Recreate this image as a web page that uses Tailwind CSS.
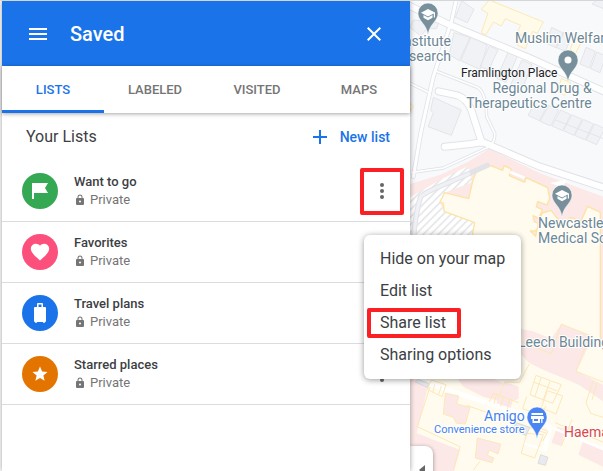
<!DOCTYPE html>
<html lang="en">
<head>
<meta charset="utf-8">
<meta name="viewport" content="width=device-width, initial-scale=1">
<title>Saved lists</title>
<script src="https://cdn.jsdelivr.net/npm/@tailwindcss/browser@4"></script>
</head>
<body class="bg-white font-[Roboto,sans-serif] text-[#3c4043]">
<div class="relative flex min-h-screen overflow-hidden border-t border-[#d5d7da] pl-0.5">

  <main class="relative z-10 w-[408px] shrink-0 bg-white shadow-[0_0_5px_rgba(0,0,0,0.4)]">
    <header class="flex h-[65px] items-center bg-[#1a73e8] px-6 text-white">
      <button type="button" aria-label="Menu" class="flex size-6 items-center justify-center">
        <svg class="size-6" viewBox="0 0 24 24" fill="currentColor" aria-hidden="true"><path d="M3 6h18v2H3zM3 11h18v2H3zM3 16h18v2H3z"/></svg>
      </button>
      <h1 class="ml-5 text-xl font-medium">Saved</h1>
      <button type="button" aria-label="Close" class="ml-auto flex size-6 items-center justify-center">
        <svg class="size-6" viewBox="0 0 24 24" fill="currentColor" aria-hidden="true"><path d="M19 6.4 17.600 5 12 10.600 6.400 5 5 6.400 10.600 12 5 17.600 6.400 19 12 13.400 17.600 19 19 17.600 13.400 12z"/></svg>
      </button>
    </header>

    <nav class="relative grid h-[47px] grid-cols-4 text-[13px] font-medium text-[#757575] shadow-[0_1px_4px_rgba(0,0,0,0.35)]">
      <a href="#lists" class="flex items-center justify-center border-b-3 border-[#1a73e8] pt-[3px] text-[#1a73e8]">LISTS</a>
      <a href="#labeled" class="flex items-center justify-center">LABELED</a>
      <a href="#visited" class="flex items-center justify-center">VISITED</a>
      <a href="#maps" class="flex items-center justify-center">MAPS</a>
    </nav>

    <div class="flex h-12 items-center justify-between pr-5 pl-6">
      <h2 class="text-base">Your Lists</h2>
      <button type="button" class="flex items-center gap-2 text-sm font-medium text-[#1a73e8]">
        <svg class="size-6" viewBox="0 0 24 24" fill="currentColor" aria-hidden="true"><path d="M19 13h-6v6h-2v-6H5v-2h6V5h2v6h6z"/></svg>
        New list
      </button>
    </div>

    <svg class="hidden" aria-hidden="true">
      <symbol id="lock" viewBox="0 0 24 24"><path d="M18 8h-1V6A5 5 0 0 0 7 6v2H6a2 2 0 0 0-2 2v10a2 2 0 0 0 2 2h12a2 2 0 0 0 2-2V10a2 2 0 0 0-2-2zm-6 9a2 2 0 1 1 0-4 2 2 0 0 1 0 4zM9 8V6a3 3 0 0 1 6 0v2z"/></symbol>
      <symbol id="dots" viewBox="0 0 24 24"><circle cx="12" cy="6" r="2"/><circle cx="12" cy="12" r="2"/><circle cx="12" cy="18" r="2"/></symbol>
    </svg>

    <ul>
      <li class="flex h-[61px] items-center border-b border-[#dadce0] pr-1.5 pl-5">
        <span class="flex size-9 items-center justify-center rounded-full bg-[#34a853] text-white">
          <svg class="size-6" viewBox="0 0 24 24" fill="currentColor" aria-hidden="true"><path d="M4 4h16l-3 5 3 5H6v6H4z"/></svg>
        </span>
        <div class="ml-4 text-[13px] leading-[18px]">
          <h3 class="font-medium">Want to go</h3>
          <p class="flex items-center gap-1 text-[#757575]"><svg class="size-3" fill="currentColor" aria-hidden="true"><use href="#lock"/></svg>Private</p>
        </div>
        <button type="button" aria-label="Options for Want to go" class="ml-auto flex h-[47px] w-11 items-center justify-center rounded-xs border-4 border-[#fb2024] text-[#666]"><svg class="size-6 shrink-0" fill="currentColor" aria-hidden="true"><use href="#dots"/></svg></button>
      </li>
      <li class="flex h-[61px] items-center border-b border-[#dadce0] pr-1.5 pl-5">
        <span class="flex size-9 items-center justify-center rounded-full bg-[#fc4f7b] text-white">
          <svg class="size-[22px]" viewBox="0 0 24 24" fill="currentColor" aria-hidden="true"><path d="m12 21.300-1.500-1.300C5.400 15.400 2 12.300 2 8.500 2 5.400 4.400 3 7.500 3c1.700 0 3.400.8 4.500 2.100C13.100 3.800 14.800 3 16.500 3 19.600 3 22 5.400 22 8.500c0 3.800-3.400 6.900-8.500 11.500z"/></svg>
        </span>
        <div class="ml-4 text-[13px] leading-[18px]">
          <h3 class="font-medium">Favorites</h3>
          <p class="flex items-center gap-1 text-[#757575]"><svg class="size-3" fill="currentColor" aria-hidden="true"><use href="#lock"/></svg>Private</p>
        </div>
        <button type="button" aria-label="Options for Favorites" class="ml-auto flex h-[47px] w-11 items-center justify-center text-[#666]"><svg class="size-6" fill="currentColor" aria-hidden="true"><use href="#dots"/></svg></button>
      </li>
      <li class="flex h-[61px] items-center border-b border-[#dadce0] pr-1.5 pl-5">
        <span class="flex size-9 items-center justify-center rounded-full bg-[#1a73e8] text-white">
          <svg class="size-6" viewBox="0 0 24 24" fill="currentColor" aria-hidden="true"><path d="M17 6h-2V3a1 1 0 0 0-1-1h-4a1 1 0 0 0-1 1v3H7a1 1 0 0 0-1 1v13a1 1 0 0 0 1 1 1 1 0 0 0 2 0h6a1 1 0 0 0 2 0 1 1 0 0 0 1-1V7a1 1 0 0 0-1-1zm-6.500-2.500h3V6h-3z" fill-rule="evenodd"/></svg>
        </span>
        <div class="ml-4 text-[13px] leading-[18px]">
          <h3 class="font-medium">Travel plans</h3>
          <p class="flex items-center gap-1 text-[#757575]"><svg class="size-3" fill="currentColor" aria-hidden="true"><use href="#lock"/></svg>Private</p>
        </div>
        <button type="button" aria-label="Options for Travel plans" class="ml-auto flex h-[47px] w-11 items-center justify-center text-[#666]"><svg class="size-6" fill="currentColor" aria-hidden="true"><use href="#dots"/></svg></button>
      </li>
      <li class="flex h-[61px] items-center border-b border-[#dadce0] pr-1.5 pl-5">
        <span class="flex size-9 items-center justify-center rounded-full bg-[#e37400] text-white">
          <svg class="size-[18px]" viewBox="0 0 24 24" fill="currentColor" aria-hidden="true"><path d="m12 17.300 6.200 3.700-1.700-7L22 9.200l-7.200-.6L12 2 9.200 8.600 2 9.200 7.500 14l-1.700 7z"/></svg>
        </span>
        <div class="ml-4 text-[13px] leading-[18px]">
          <h3 class="font-medium">Starred places</h3>
          <p class="flex items-center gap-1 text-[#757575]"><svg class="size-3" fill="currentColor" aria-hidden="true"><use href="#lock"/></svg>Private</p>
        </div>
        <button type="button" aria-label="Options for Starred places" class="ml-auto flex h-[47px] w-11 items-center justify-center text-[#666]"><svg class="size-6" fill="currentColor" aria-hidden="true"><use href="#dots"/></svg></button>
      </li>
    </ul>
  </main>

  <section aria-label="Map" class="relative min-w-0 flex-1 overflow-hidden bg-[#f8f9fb]">
    <svg class="absolute inset-0 h-full w-full" viewBox="410 1 193 470" preserveAspectRatio="xMinYMin slice" font-family="Roboto, sans-serif">
      <defs>
        <pattern id="hatch" width="16" height="16" patternUnits="userSpaceOnUse" patternTransform="rotate(45)"><rect width="16" height="16" fill="#fff"/><rect width="5" height="16" fill="#e6e7ea"/></pattern>
        <path id="pin" d="M0 28C-1 21-4 18-7 14-9 11-10 9-10 6A10 10 0 0 1 10 6C10 9 9 11 7 14 4 18 1 21 0 28z"/>
        <path id="cap" d="M0 0 7 3.500v5H5.800V4.400L0 7.400-7 3.700zM-4.500 6 0 8.400 4.500 6v2.700L0 11.200-4.500 8.700z" fill="#fff"/>
      </defs>
      <g transform="translate(400 0) scale(.33333)" stroke-linejoin="round">
        <rect x="30" y="0" width="700" height="1420" fill="#f8f9fb"/>

        <!-- city blocks -->
        <g fill="#f1f2f5" stroke="#e3e5e9" stroke-width="3">
          <path d="M185 2 222 28 202 68 166 52zM30 82l10-22 76 8-6 18-28 0-20 22z"/>
          <path d="m162 98 48 14-32 70-30-18zM214 108l48 28-22 72-58-26zM268 138l26 12-28 60-26-10zM325 155l28 12-35 80-28-12zM366 180l30 14-34 84-32-20z"/>
          <path d="m100 292 84 38-30 76-70-26 16-42-8-6z"/>
          <path d="m455 82 36 18-22 44-30-14zM490 96l26 12-20 46-28-12zM558 142l28 12-18 50-28-12zM590 156l28 12-18 50-28-12zM590 0h30v30l-44-18z"/>
          <path d="m410 300 32 16-24 46-34-16zM446 316l30 14-24 48-32-14zM482 330l30 14-24 48-32-14zM516 344l30 14-24 48-32-14zM550 358l30 14-24 48-32-14zM584 372l30 14-24 48-32-14z"/>
        </g>
        <g fill="#fffbe8" stroke="#fae9b8" stroke-width="3">
          <path d="m268 0 162 66-18 34-14-6-22 52-24-10 14-30-14-8 10-22-46-20-12 22-24-12-22 38-14-6 20-58-20-12z"/>
          <path d="m524 112 22 10-20 40-18-6zM484 236l28 12-18 38-22-12zM30 308l10 12-10 14z"/>
        </g>

        <!-- hospital and campus land -->
        <path d="M30 552 120 525 205 485 268 446 420 520 609 590V1420H30z" fill="#fce8e6"/>
        <path d="M30 592 120 540 200 500 210 512 200 524 218 532 212 548 140 576 120 610 132 630 224 668 210 720 30 720z" fill="url(#hatch)"/>
        <path d="m206 596 14-60 10-22 40-18 38 15 4-14 22 10-6 20 46 20 4-14 65 30 6 32-8 20-28-10-4 16 18 8-10 26-18-8 4 18 18 8-14 20-16 0 16 16 10-50 10-20 26-8 30 38 18 2 10-18 32 10 20-44 38 18V1060H150L224 668l-92-34-2-24-10-4 14-28z" fill="#fffbee" stroke="#fde3a6" stroke-width="4"/>
        <path d="M450 549l48-10 0 8-14 14zM332 512l44 18-4 8-44-18z" fill="#fff"/>

        <!-- roads -->
        <g fill="none" stroke-linecap="round">
          <g stroke="#e1e3e8">
            <path stroke-width="24" d="M0 4 150 75 380 170 640 287M116 274 172 286Q200 296 214 330L245 428"/>
            <path stroke-width="14" d="M170-5 155 62 100 230 62 400 40 530"/>
            <path stroke-width="10" d="M105 212 232 262Q258 276 260 350L284 400Q286 420 272 436M30 518 130 504 268 440M30 250 84 276"/>
            <path stroke-width="24" d="M134 440 212 432 248 426 420 500 640 572"/>
            <path stroke-width="16" d="M262 496 150 546Q80 574 62 590 46 640 40 720"/>
          </g>
          <g stroke="#fff">
            <path stroke-width="18" d="M0 4 150 75 380 170 640 287M116 274 172 286Q200 296 214 330L245 428"/>
            <path stroke-width="9" d="M170-5 155 62 100 230 62 400 40 530"/>
            <path stroke-width="5" d="M105 212 232 262Q258 276 260 350L284 400Q286 420 272 436M30 518 130 504 268 440M30 250 84 276"/>
            <path stroke-width="18" d="M134 440 212 432 248 426 420 500 640 572"/>
            <path stroke="#f0f1f4" stroke-width="10" d="M206 521 150 546Q80 574 62 590 46 640 40 720"/>
          </g>
        </g>
        <path d="m466 360 150 58" stroke="#e3e5e9" stroke-width="3" fill="none"/>

        <!-- Leech Building and surroundings -->
        <path d="M360 1020H609V1420H30V1130z" fill="#fffbee"/>
        <g fill="#fce8e6">
          <path d="m484 972 84 34-2 30-36 78 79 40v50l-70-48-44-20-64-26-44-22-48-50-10-40 0-18 70 14 55 22z"/>
          <path d="m136 1180 40 8-6 24 40 10-14 50-26-2-10-18-30-10zM314 1146l42 14 0 36-18 8-8 24-40-18zM170 1132l100 0 40 18-16 52-44-12-60-30zM232 1314l70 18-8 30-26-12-6 16 20 8-6 14-50-14zM472 1280l24 8-12 50-30-10zM548 1326l61 22v52l-74-36z"/>
          <path d="M30 1132 58 1138 84 1160 50 1300 180 1350 160 1420H30z"/>
        </g>
        <g fill="none" stroke="#fff">
          <path stroke-width="14" d="m80 1148 180 60 130 42 60 30-16 70"/>
          <path stroke-width="8" d="m440 1276 200 84M370 1330l70 22"/>
        </g>
        <g fill="none" stroke="#fce8b8" stroke-width="3">
          <path d="M484 972 454 1062 356 1020M484 972 568 1006 528 1114 609 1146"/>
          <path d="M90 1160 52 1280 180 1340 160 1410M82 1168l12-28 44 14-12 36zM104 1154l-6 24M124 1158l-8 26M268 1206l12-26 76 28M290 1180l-8 32M310 1188l-8 32M330 1196l-8 32M136 1180l40 8-6 24 40 10-14 50-26-2-10-18-30-10zM232 1314l70 18-8 30-26-12-6 16 20 8-6 14-50-14z"/>
          <path d="m388 1092-30 56-44-2-20 50M408 1126l76 28-26 56-68-26zM400 1146l70 26M424 1132l-20 60M450 1144l-22 60M442 1172l46 16-20 54-44-18zM380 1190l-12 36 50 18M580 1142l-22 66 14 32 37 12M590 1150l-14 50M465 1268l144 58M438 1218l-20 40M380 1300l-16 60 40 14 26-70zM420 1284l24 10-16 30"/>
          <path d="M200 1216 440 1300M516 1258l-32 80M240 1384 220 1410"/>
        </g>
        <g fill="#e8eaed" stroke="#cfd2d8" stroke-width="2"><path d="m54 1138 32 12-4 12-36-16zM348 1268l42 14-12 24-38-14zM422 1364l22 8-8 24-22-6z"/></g>
      </g>

      <!-- pins -->
      <g fill="#78909c" stroke="#fff" stroke-width=".5">
        <use href="#pin" x="428" y="7"/><use href="#pin" x="568" y="54"/><use href="#pin" x="562" y="189"/><use href="#pin" x="537" y="411" fill="#4a86f3"/>
      </g>
      <use href="#cap" x="428" y="9"/><use href="#cap" x="562" y="190"/><circle cx="568" cy="60" r="3.500" fill="#fff"/>
      <path d="M531.500 413h11.500v2h-11.500zM531 416h12.500l.5 3h-1.500v4h-10v-4H531zm3 3v2h4v-2zm6 0v4h1.200v-4z" fill="#fff" fill-rule="evenodd"/>

      <!-- place names -->
      <g font-size="14" fill="#6c8795" stroke="#fff" stroke-width="2" paint-order="stroke" stroke-linejoin="round">
        <text x="451" y="46" text-anchor="end">Institute</text>
        <text x="451" y="61" text-anchor="end">Research</text>
        <text x="515" y="43">Muslim Welfare</text>
        <text x="542" y="93" text-anchor="middle">Regional Drug &amp;</text>
        <text x="529" y="108" text-anchor="middle">Therapeutics Centre</text>
        <text x="538" y="228">Newcastle</text>
        <text x="538" y="243">Medical School</text>
        <text x="518" y="347">Leech Building</text>
        <text x="484" y="421" fill="#4382ed">Amigo</text>
        <text x="564" y="437" fill="#d9484b">Haematology</text>
        <text x="434" y="433" font-size="11" fill="#4382ed">Convenience store</text>
        <text x="461" y="77" font-size="12" fill="#202124" stroke-width="1">Framlington Place</text>
      </g>
    </svg>
    <button type="button" aria-label="Collapse side panel" class="absolute top-[445px] left-0 flex h-12 w-[23px] items-center justify-center rounded-r-lg bg-white text-[#666] shadow-[0_1px_4px_rgba(0,0,0,0.4)]">
      <svg class="h-2.5 w-1.5" viewBox="0 0 6 10" fill="currentColor" aria-hidden="true"><path d="M6 0v10L0 5z"/></svg>
    </button>
  </section>

  <div role="menu" class="absolute top-[234px] left-[364px] z-20 flex w-[157px] flex-col rounded-md bg-white py-2 text-base text-[#3c4043] shadow-[0_1px_6px_rgba(0,0,0,0.4)]">
    <button type="button" role="menuitem" class="h-8 px-4 text-left whitespace-nowrap">Hide on your map</button>
    <button type="button" role="menuitem" class="h-8 px-4 text-left whitespace-nowrap">Edit list</button>
    <button type="button" role="menuitem" class="relative h-8 px-4 text-left whitespace-nowrap">Share list<span class="absolute inset-y-px left-[3px] w-[94px] rounded-xs border-4 border-[#fb2024]"></span></button>
    <button type="button" role="menuitem" class="h-8 px-4 text-left whitespace-nowrap">Sharing options</button>
  </div>
</div>
</body>
</html>
